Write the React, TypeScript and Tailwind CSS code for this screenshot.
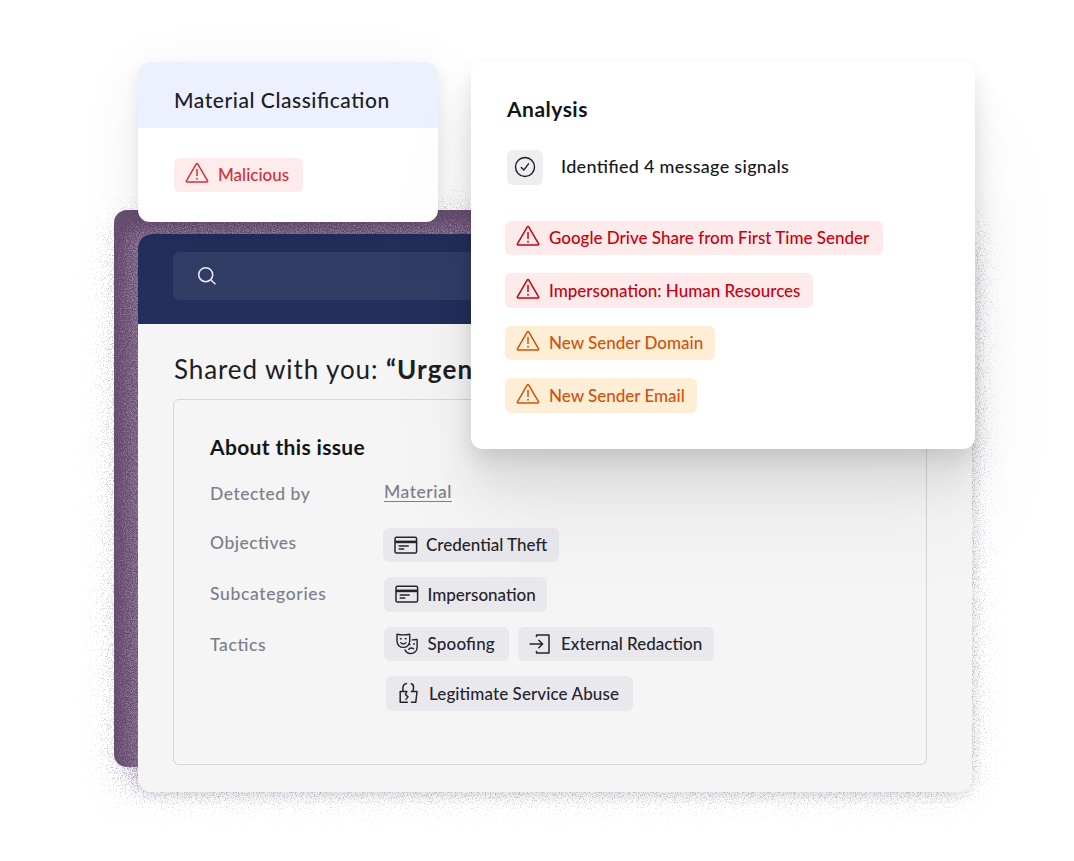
import React from "react";
import { clsx } from "clsx";

type Tone = "red" | "crimson" | "amber";

const tones: Record<Tone, string> = {
  red: "bg-[#feebeb] text-[#d42f38]",
  crimson: "bg-[#fdebec] text-[#c8000f]",
  amber: "bg-[#feeed6] text-[#d1520c]",
};

const signals: { label: string; tone: Tone; width: string }[] = [
  { label: "Google Drive Share from First Time Sender", tone: "crimson", width: "w-[378px]" },
  { label: "Impersonation: Human Resources", tone: "crimson", width: "w-[307.5px]" },
  { label: "New Sender Domain", tone: "amber", width: "w-[210px]" },
  { label: "New Sender Email", tone: "amber", width: "w-[192px]" },
];

function WarningIcon() {
  return (
    <svg viewBox="0 0 24 22" className="w-6 h-[22px] shrink-0" fill="none" stroke="currentColor" strokeWidth="1.5" strokeLinecap="round" strokeLinejoin="round">
      <path d="M11.3 1.9a.85.85 0 0 1 1.4 0l9.9 16.9a.8.8 0 0 1-.7 1.2H2.1a.8.8 0 0 1-.7-1.2z" />
      <path d="M12 7.5v6" />
      <path d="M12 16.6v.2" strokeWidth="1.8" />
    </svg>
  );
}

function CardIcon() {
  return (
    <svg viewBox="0 0 24 24" className="size-6 shrink-0" fill="none" stroke="currentColor" strokeWidth="1.5" strokeLinecap="round">
      <rect x="1" y="4.2" width="21.6" height="15.8" rx="1.6" />
      <path d="M1 8.900h21.6" strokeWidth="2.6" strokeLinecap="butt" />
      <path d="M5.200 13h9M5.200 16h4.500" strokeWidth="1.5" />
    </svg>
  );
}

function MasksIcon() {
  return (
    <svg viewBox="0 0 24 24" className="size-6 shrink-0" fill="none" stroke="currentColor" strokeWidth="1.4" strokeLinecap="round" strokeLinejoin="round">
      <path d="M2 2.200c4 .9 8.500.9 12.700 0v7c0 3.600-2.900 6.200-6.300 6.200S2 12.800 2 9.200z" />
      <path d="M5.400 6.700h.8M10.300 6.700h.8M5.800 10.800c1.500 1.300 3.600 1.300 5.100 0" />
      <path d="M17.200 7.900c1.700 0 3.200-.1 4.900-.5v8c0 3.300-2.700 6.200-6.400 6.200-2.600 0-4.700-1.500-5.700-3.700" />
      <path d="M14.200 12.600h.9M18.600 12h.8M13.800 17.300c1-1.500 3.400-1.700 4.800-.5" />
    </svg>
  );
}

function ExitIcon() {
  return (
    <svg viewBox="0 0 24 24" className="size-6 shrink-0" fill="none" stroke="currentColor" strokeWidth="1.5" strokeLinecap="round" strokeLinejoin="round">
      <path d="M7.500 4.500V3h12.500v18H7.500v-1.500" />
      <path d="M1.100 12h12.500M9.800 8.200l3.800 3.800-3.800 3.800" />
    </svg>
  );
}

function BrokenLockIcon() {
  return (
    <svg viewBox="0 0 24 24" className="size-6 shrink-0" fill="none" stroke="currentColor" strokeWidth="1.5" strokeLinecap="round" strokeLinejoin="round">
      <path d="M10.300 21.200H3.200V10.500h6.600l-1.300 3 2.500 2.400-2 2.500" />
      <path d="M5.900 10.300V7c0-2.500 1.200-4 3.600-4.600" />
      <path d="M14.300 10.500H20l-1.200 10.700h-4.400" />
      <path d="M14.300 2.800c2 .7 2.500 2 2.200 4l-.5 3.500" />
    </svg>
  );
}

function Badge({ label, tone, width }: { label: string; tone: Tone; width: string }) {
  return (
    <div className={clsx("flex items-center h-[34.5px] rounded-md pl-[11px] text-[17px] whitespace-nowrap", tones[tone], width)}>
      <span className="-mt-[3px] mr-[9px]">
        <WarningIcon />
      </span>
      <span>{label}</span>
    </div>
  );
}

function Tag({ label, icon, width, className }: { label: string; icon: React.ReactNode; width: string; className?: string }) {
  return (
    <div className={clsx("flex items-center h-[34.5px] rounded-md bg-[#e8e7ec]/90 pl-[11px] text-[17px] text-[#24252c] whitespace-nowrap", width, className)}>
      {icon}
      <span className="ml-[8.5px] mt-px">{label}</span>
    </div>
  );
}

/* Dissolve effect: blurred shape thresholded against fine noise */
function Grain({ color, spread, seed, children }: { color: string; spread: number; seed: number; children: React.ReactNode }) {
  const id = `grain-${seed}`;
  return (
    <svg width="1074" height="861" viewBox="0 0 1074 861" aria-hidden="true">
      <filter id={id} x="0" y="0" width="1074" height="861" filterUnits="userSpaceOnUse" colorInterpolationFilters="sRGB">
        <feGaussianBlur in="SourceAlpha" stdDeviation={spread} result="soft" />
        <feTurbulence type="fractalNoise" baseFrequency="0.83" numOctaves="3" seed={seed} />
        <feColorMatrix values="0 0 0 0 0  0 0 0 0 0  0 0 0 0 0  1.9 0 0 0 -0.35" result="noise" />
        <feComposite in="soft" in2="noise" operator="arithmetic" k2="1" k3="1" k4="-1" />
        <feComponentTransfer result="dots">
          <feFuncA type="linear" slope="1.1" />
        </feComponentTransfer>
        <feFlood floodColor={color} />
        <feComposite in2="dots" operator="in" />
      </filter>
      <g filter={`url(#${id})`}>{children}</g>
    </svg>
  );
}

export default function App() {
  return (
    <main className="relative w-[1074px] h-[861px] overflow-hidden bg-white font-['Lato',sans-serif] font-medium text-[#1c1e24] [font-feature-settings:'liga'_1]">
      {/* Grainy shadow and purple plate behind the window */}
      <div className="absolute inset-0">
        <Grain color="#9c8bae" spread={20} seed={3}>
          <rect x="114" y="214" width="858" height="578" rx="14" />
        </Grain>
      </div>
      <div className="absolute left-[114px] top-[210px] w-[834px] h-[556.5px] rounded-[13px] overflow-hidden bg-[#674e70]">
        <div className="absolute -left-[114px] -top-[210px]">
          <Grain color="#a98fb4" spread={14} seed={8}>
            <rect x="124" y="222" width="860" height="590" rx="14" />
          </Grain>
        </div>
      </div>

      {/* Issue window */}
      <section className="relative ml-[138px] mt-[234px] w-[834px] h-[558px] rounded-[14px] overflow-hidden bg-[#f5f5f5] shadow-[0_4px_14px_rgba(0,0,0,0.12)]">
        <header className="h-[90px] bg-[#232f5c] pl-[34.5px] pt-[18px]">
          <div className="h-12 rounded-md bg-[#323d66] flex items-center pl-6">
            <svg viewBox="0 0 20 20" className="size-5" fill="none" stroke="#eeeef3" strokeWidth="1.5">
              <circle cx="8.700" cy="8.700" r="7" />
              <path d="M13.700 13.700l4.800 4.600" />
            </svg>
          </div>
        </header>
        <h1 className="h-[75px] pl-9 pt-[27.5px] text-[26px] leading-[34px] font-normal tracking-[0.9px] whitespace-nowrap">
          Shared with you: <span className="font-bold tracking-[1.15px]">“Urgent”</span>
        </h1>
        <div className="ml-[34.500px] w-[754.500px] h-[366px] rounded-md border-[1.5px] border-[#d5d5d7] pl-[36.500px] pt-[32.500px]">
          <h2 className="text-[21px] leading-[28px] font-bold tracking-[0.35px] text-[#131517]">About this issue</h2>
          <dl className="mt-[13px] grid grid-cols-[174px_1fr] grid-rows-[42.500px_49.500px_49.500px_90px] text-[17.500px] leading-[26px] tracking-[0.5px] text-[#7c7e89]">
            <dt className="pt-[7px]">Detected by</dt>
            <dd className="pt-[5px] underline underline-offset-3">Material</dd>
            <dt className="pt-[14px]">Objectives</dt>
            <dd className="pt-[11.500px] -ml-[1.500px] tracking-normal">
              <Tag label="Credential Theft" icon={<CardIcon />} width="w-[176.500px]" />
            </dd>
            <dt className="pt-[15.500px] tracking-[0.65px]">Subcategories</dt>
            <dd className="pt-[11.500px] tracking-normal">
              <Tag label="Impersonation" icon={<CardIcon />} width="w-[163px]" />
            </dd>
            <dt className="pt-[17px] tracking-[0.65px]">Tactics</dt>
            <dd className="pt-[11.500px] flex flex-wrap content-start gap-x-[9px] gap-y-[15px] tracking-normal">
              <Tag label="Spoofing" icon={<MasksIcon />} width="w-[124.500px]" className="tracking-[0.2px]" />
              <Tag label="External Redaction" icon={<ExitIcon />} width="w-[196.500px]" />
              <Tag label="Legitimate Service Abuse" icon={<BrokenLockIcon />} width="w-[247.500px]" className="ml-[1.500px] tracking-[0.1px]" />
            </dd>
          </dl>
        </div>
      </section>

      {/* Classification card */}
      <section className="absolute left-[138px] top-[62px] w-[300px] h-[160px] rounded-xl overflow-hidden bg-white shadow-[0_6px_14px_rgba(0,0,0,0.08),0_14px_60px_rgba(0,0,0,0.08)]">
        <h2 className="h-[65.500px] bg-[#edf1fe] pl-9 pt-6 text-[21px] leading-[28px] tracking-[0.55px] text-[#1d2026] whitespace-nowrap">
          Material Classification
        </h2>
        <div className="pl-9 pt-[30px]">
          <Badge label="Malicious" tone="red" width="w-[129px]" />
        </div>
      </section>

      {/* Analysis card */}
      <section className="absolute left-[471px] top-[62px] w-[504px] h-[386.500px] rounded-xl bg-white pl-[34.500px] pt-[33px] shadow-[0_9px_20px_rgba(0,0,0,0.10),0_36px_40px_rgba(0,0,0,0.07),0_70px_100px_rgba(0,0,0,0.05)]">
        <h2 className="pl-[1.500px] text-[21px] leading-[28px] font-bold tracking-[0.5px] text-[#131517]">Analysis</h2>
        <div className="mt-[27px] pl-[1.500px] flex items-center">
          <span className="w-9 h-[34.500px] rounded-md bg-[#eeeef1] flex items-center justify-center">
            <svg viewBox="0 0 22 22" className="size-[22px]" fill="none" stroke="#1c1e24" strokeWidth="1.4" strokeLinecap="round" strokeLinejoin="round">
              <circle cx="11" cy="11" r="9.500" />
              <path d="M7.300 11.600l2.500 2.500 4.700-6.300" />
            </svg>
          </span>
          <p className="ml-[18px] -mt-[2px] text-[18px] tracking-[0.3px] text-[#16181c]">Identified 4 message signals</p>
        </div>
        <div className="mt-9 -ml-[0.500px] flex flex-col gap-[18px]">
          {signals.map((signal) => (
            <Badge key={signal.label} {...signal} />
          ))}
        </div>
      </section>
    </main>
  );
}
